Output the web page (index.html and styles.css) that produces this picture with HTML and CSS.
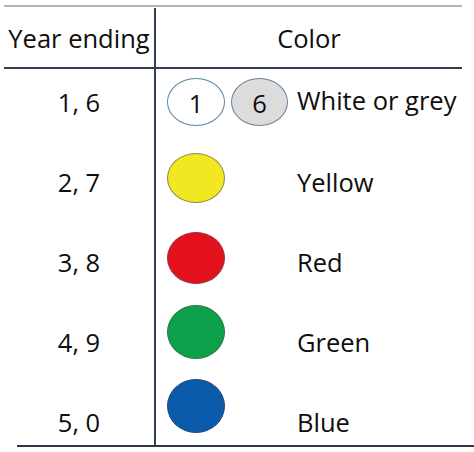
FILE: index.html
```html
<!DOCTYPE html>
<html lang="en">
<head>
<meta charset="utf-8">
<title>Year ending colors</title>
<link rel="stylesheet" href="styles.css">
</head>
<body>
<div class="sheet">
  <div class="rule-top"></div>
  <div class="grid">
    <div class="cell head year">Year ending</div>
    <div class="cell head color">Color</div>

    <div class="cell year">1, 6</div>
    <div class="cell color row1">
      <div class="swatches">
        <span class="dot dot-white">1</span>
        <span class="dot dot-grey">6</span>
      </div>
      <span class="label label-first">White or grey</span>
    </div>

    <div class="cell year">2, 7</div>
    <div class="cell color">
      <div class="swatches"><span class="dot dot-yellow"></span></div>
      <span class="label">Yellow</span>
    </div>

    <div class="cell year">3, 8</div>
    <div class="cell color">
      <div class="swatches"><span class="dot dot-red"></span></div>
      <span class="label">Red</span>
    </div>

    <div class="cell year">4, 9</div>
    <div class="cell color">
      <div class="swatches"><span class="dot dot-green"></span></div>
      <span class="label">Green</span>
    </div>

    <div class="cell year">5, 0</div>
    <div class="cell color">
      <div class="swatches"><span class="dot dot-blue"></span></div>
      <span class="label">Blue</span>
    </div>
  </div>
  <div class="rule-bottom"></div>
</div>
</body>
</html>
```

FILE: styles.css
```css
html, body {
  margin: 0;
  padding: 0;
  background: #ffffff;
}

body {
  font-family: "Open Sans", "Noto Sans", sans-serif;
  color: #0e0e0e;
  font-size: 25.5px;
}

.sheet {
  padding-top: 5px;
  width: 474px;
}

.rule-top {
  margin-left: 4px;
  width: 458px;
  height: 2px;
  background: #b4b4b4;
  margin-bottom: 1px;
}

.grid {
  margin-left: 4px;
  width: 458px;
  display: grid;
  grid-template-columns: 150px 308px;
  grid-template-rows: 61px 80px 80px 80px 80px 56px;
}

.cell {
  line-height: 32px;
  padding-top: 17px;
  box-sizing: border-box;
}

.cell.head {
  padding-top: 14px;
  border-bottom: 2px solid #373e52;
  text-align: center;
}

.year {
  text-align: center;
}

.color {
  border-left: 2px solid #33405a;
}

.cell.color:not(.head) {
  display: flex;
  align-items: flex-start;
}

.swatches {
  width: 130px;
  margin-left: 11px;
  display: flex;
  gap: 6px;
  flex: none;
}

.dot {
  display: block;
  width: 58px;
  height: 50px;
  border-radius: 50%;
  box-sizing: border-box;
  text-align: center;
  line-height: 48px;
}

.dot-white {
  height: 48px;
  margin-top: -8px;
  background: #ffffff;
  border: 1.5px solid #5a86a6;
  line-height: 48px;
}

.dot-grey {
  width: 57px;
  height: 48px;
  margin-top: -8px;
  background: #dcdcdc;
  border: 1.5px solid #6a8398;
  line-height: 48px;
}

.dot-yellow {
  margin-top: -13px;
  background: #f2e822;
  border: 1.5px solid #8a8c3c;
}

.dot-red {
  height: 52px;
  margin-top: -14px;
  background: #e3111e;
  border: 1.5px solid #a1323c;
}

.dot-green {
  height: 54px;
  margin-top: -21px;
  background: #0ba14a;
  border: 1.5px solid #2f7048;
}

.dot-blue {
  height: 54px;
  margin-top: -27px;
  background: #0b5bab;
  border: 1.5px solid #1f4a80;
}

.label {
  display: block;
}

.label-first {
  margin-top: -2px;
}

.rule-bottom {
  margin-left: 17px;
  width: 457px;
  height: 2px;
  background: #2f3546;
}
```
